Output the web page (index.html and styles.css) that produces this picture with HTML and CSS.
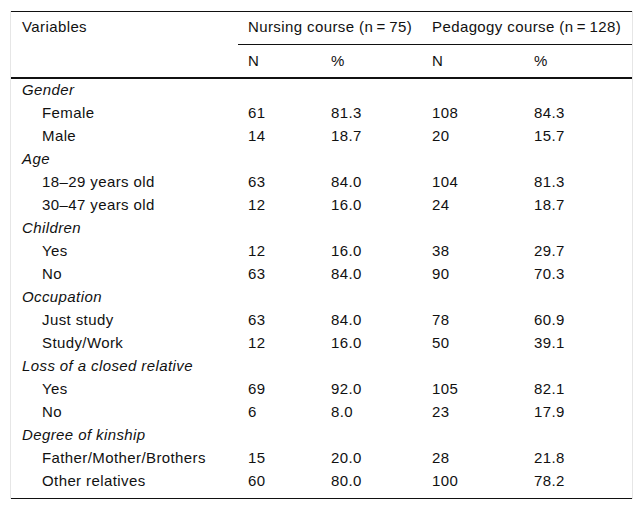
FILE: index.html
```html
<!DOCTYPE html>
<html lang="en">
<head>
<meta charset="utf-8">
<title>Table</title>
<link rel="stylesheet" href="styles.css">
</head>
<body>
<div class="frame">
<table class="data">
<colgroup>
<col class="c-var"><col class="c-n1"><col class="c-p1"><col class="c-n2"><col class="c-p2">
</colgroup>
<thead>
<tr class="h1">
<th rowspan="2" class="var-head">Variables</th>
<th colspan="2" class="group">Nursing course (n&#8201;=&#8201;75)</th>
<th colspan="2" class="group">Pedagogy course (n&#8201;=&#8201;128)</th>
</tr>
<tr class="h2">
<th>N</th><th>%</th><th>N</th><th>%</th>
</tr>
</thead>
<tbody>
<tr class="cat"><td colspan="5">Gender</td></tr>
<tr><td class="sub">Female</td><td>61</td><td>81.3</td><td>108</td><td>84.3</td></tr>
<tr><td class="sub">Male</td><td>14</td><td>18.7</td><td>20</td><td>15.7</td></tr>
<tr class="cat"><td colspan="5">Age</td></tr>
<tr><td class="sub">18–29 years old</td><td>63</td><td>84.0</td><td>104</td><td>81.3</td></tr>
<tr><td class="sub">30–47 years old</td><td>12</td><td>16.0</td><td>24</td><td>18.7</td></tr>
<tr class="cat"><td colspan="5">Children</td></tr>
<tr><td class="sub">Yes</td><td>12</td><td>16.0</td><td>38</td><td>29.7</td></tr>
<tr><td class="sub">No</td><td>63</td><td>84.0</td><td>90</td><td>70.3</td></tr>
<tr class="cat"><td colspan="5">Occupation</td></tr>
<tr><td class="sub">Just study</td><td>63</td><td>84.0</td><td>78</td><td>60.9</td></tr>
<tr><td class="sub">Study/Work</td><td>12</td><td>16.0</td><td>50</td><td>39.1</td></tr>
<tr class="cat"><td colspan="5">Loss of a closed relative</td></tr>
<tr><td class="sub">Yes</td><td>69</td><td>92.0</td><td>105</td><td>82.1</td></tr>
<tr><td class="sub">No</td><td>6</td><td>8.0</td><td>23</td><td>17.9</td></tr>
<tr class="cat"><td colspan="5">Degree of kinship</td></tr>
<tr><td class="sub">Father/Mother/Brothers</td><td>15</td><td>20.0</td><td>28</td><td>21.8</td></tr>
<tr class="last"><td class="sub">Other relatives</td><td>60</td><td>80.0</td><td>100</td><td>78.2</td></tr>
</tbody>
</table>
</div>
</body>
</html>
```
FILE: styles.css
```css
html, body {
  margin: 0;
  padding: 0;
  background: #fff;
}
body {
  font-family: "Liberation Sans", Arial, sans-serif;
  font-size: 15px;
  letter-spacing: 0.4px;
  color: #111;
}
.frame {
  margin: 11px 0 0 10px;
  width: 621px;
  border-left: 1px solid #e6e6e6;
  border-right: 1px solid #e6e6e6;
}
.data {
  width: 621px;
  border-collapse: collapse;
  table-layout: fixed;
  border-top: 1px solid #111;
  border-bottom: 1px solid #111;
}
.c-var { width: 227px; }
.c-n1 { width: 83px; }
.c-p1 { width: 101px; }
.c-n2 { width: 102px; }
.c-p2 { width: 108px; }
th, td {
  text-align: left;
  font-weight: normal;
  line-height: 17px;
  padding: 2px 10px 4px;
  white-space: nowrap;
}
thead th {
  vertical-align: top;
}
.h1 th {
  padding: 6px 10px 9px;
}
.h1 .var-head {
  padding-left: 11px;
}
.h1 .group {
  border-bottom: 1px solid #111;
}
.h2 th {
  padding: 7px 10px 8px;
}
thead {
  border-bottom: 2px solid #111;
}
.cat td {
  font-style: italic;
  padding-left: 11px;
}
td.sub {
  padding-left: 31px;
}
.last td {
  padding-bottom: 9px;
}
```
